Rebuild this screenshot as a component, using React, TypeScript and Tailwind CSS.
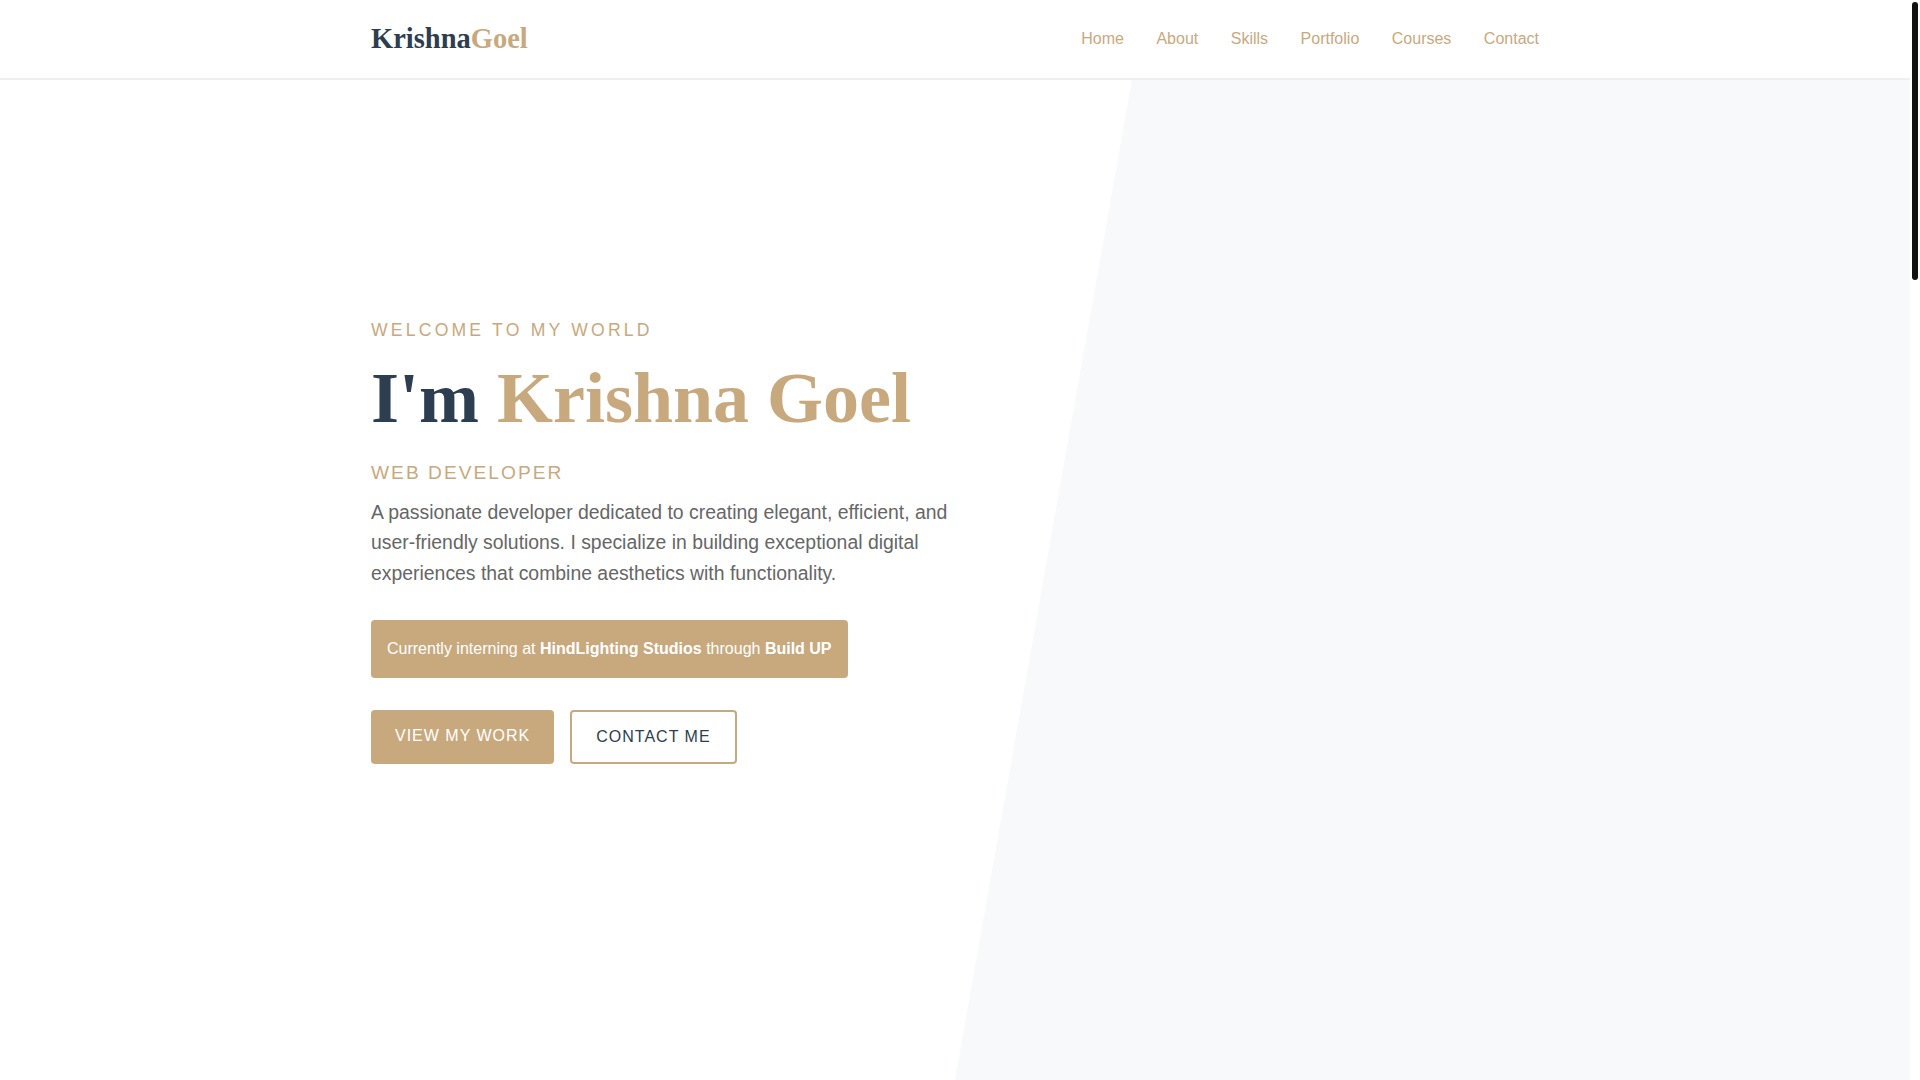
import React from 'react';

const navLinks = ['Home', 'About', 'Skills', 'Portfolio', 'Courses', 'Contact'];

const Navbar: React.FC = () => (
  // fixed bar, kept clear of the 10px scrollbar strip
  <nav className="fixed left-0 right-[10px] top-0 z-20 border-b-2 border-[#efefef] bg-white">
    <div className="mx-auto flex h-[78px] w-full max-w-[1200px] items-center justify-between px-4">
      <a href="#home" className="font-['Liberation_Serif',serif] text-[28.5px] font-bold leading-none text-[#2c3e50]">
        Krishna<span className="text-[#c8a97e]">Goel</span>
      </a>
      <ul className="flex items-center gap-[32.5px]">
        {navLinks.map((link) => (
          <li key={link}>
            <a href={`#${link.toLowerCase()}`} className="text-[16px] text-[#c8a97e]">
              {link}
            </a>
          </li>
        ))}
      </ul>
    </div>
  </nav>
);

const Hero: React.FC = () => (
  <section id="home" className="relative flex h-screen items-center overflow-hidden bg-white">
    {/* angled grey panel on the right */}
    <div className="absolute right-0 top-0 h-full w-1/2 bg-[#f8f9fa] [clip-path:polygon(20%_0,100%_0,100%_100%,0_100%)]" />
    <div className="relative mx-auto w-full max-w-[1200px] px-4">
      <div className="max-w-[600px]">
        <p className="mb-[10px] text-[17.6px] uppercase tracking-[3.2px] text-[#c8a97e]">Welcome to my world</p>
        <h1 className="mb-[17px] font-['Liberation_Serif',serif] text-[72px] font-bold leading-[1.2] text-[#2c3e50]">
          I'm <span className="text-[#c8a97e]">Krishna Goel</span>
        </h1>
        <p className="mb-2 text-[19.2px] uppercase tracking-[2px] text-[#c8a97e]">Web Developer</p>
        <p className="mb-8 text-[19.4px] leading-[30.6px] text-[#666666]">
          A passionate developer dedicated to creating elegant, efficient, and user-friendly solutions. I specialize in
          building exceptional digital experiences that combine aesthetics with functionality.
        </p>
        <div className="mb-8 w-fit rounded bg-[#c8a97e] p-4 text-[16px] text-white">
          Currently interning at <strong>HindLighting Studios</strong> through <strong>Build UP</strong>
        </div>
        <div className="flex gap-4">
          <a
            href="#portfolio"
            className="rounded border-2 border-[#c8a97e] bg-[#c8a97e] px-[22px] pb-[13px] pt-[11px] text-[16px] uppercase tracking-[1px] text-white"
          >
            View My Work
          </a>
          <a
            href="#contact"
            className="rounded border-2 border-[#c8a97e] bg-white px-6 py-3 text-[16px] uppercase tracking-[1px] text-[#2c3e50]"
          >
            Contact Me
          </a>
        </div>
      </div>
    </div>
  </section>
);

const Section: React.FC<{ id: string; title: string; grey?: boolean; children: React.ReactNode }> = ({
  id,
  title,
  grey,
  children,
}) => (
  <section id={id} className={`min-h-[611px] py-24 ${grey ? 'bg-[#f8f9fa]' : 'bg-white'}`}>
    <div className="mx-auto w-full max-w-[1200px] px-4">
      <h2 className="mb-12 text-center font-['Liberation_Serif',serif] text-[40px] font-bold text-[#2c3e50]">{title}</h2>
      {children}
    </div>
  </section>
);

// slim scrollbar strip at the right edge of the window
const ScrollTrack: React.FC = () => (
  <div className="w-[10px] shrink-0 bg-white pt-[2px]">
    <div className="ml-[2px] h-[278px] w-[6px] rounded-full bg-[#111111]" />
  </div>
);

export default function App() {
  return (
    <div className="flex h-screen bg-white font-['Liberation_Sans',Arial,sans-serif] leading-[1.6] text-[#333333]">
      <div className="min-w-0 flex-1 overflow-y-auto [scrollbar-width:none]">
        <Navbar />
        <Hero />
        <Section id="about" title="About Me" grey>
          <p className="mx-auto max-w-[700px] text-center text-[18px] text-[#666666]">
            I build websites and web applications with a focus on clean code and thoughtful design.
          </p>
        </Section>
        <Section id="skills" title="Skills">
          <div className="grid grid-cols-4 gap-6">
            {['HTML', 'CSS', 'JavaScript', 'React'].map((s) => (
              <div key={s} className="rounded border border-[#eeeeee] p-6 text-center text-[#2c3e50]">
                {s}
              </div>
            ))}
          </div>
        </Section>
        <Section id="portfolio" title="Portfolio" grey>
          <div className="grid grid-cols-3 gap-6">
            {['Project One', 'Project Two', 'Project Three'].map((p) => (
              <div key={p} className="h-[220px] rounded bg-white p-6 text-[#2c3e50]">
                {p}
              </div>
            ))}
          </div>
        </Section>
        <Section id="courses" title="Courses">
          <p className="text-center text-[#666666]">Web development, design and programming courses.</p>
        </Section>
        <Section id="contact" title="Contact" grey>
          <p className="text-center text-[#666666]">Feel free to reach out for collaborations or just a friendly hello.</p>
        </Section>
      </div>
      <ScrollTrack />
    </div>
  );
}
